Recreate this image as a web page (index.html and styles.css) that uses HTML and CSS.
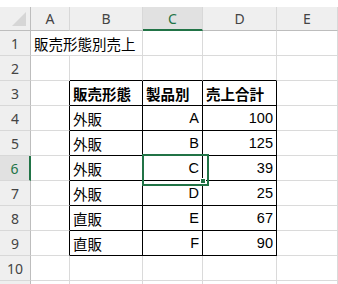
FILE: index.html
```html
<!DOCTYPE html>
<html lang="ja">
<head>
    <meta charset="UTF-8">
    <title>販売形態別売上</title>
    <link rel="stylesheet" href="styles.css">
</head>
<body>
    <div class="topbar"></div>
    <div class="sheet">
        <div class="corner">
            <svg width="16" height="16" viewBox="0 0 16 16"><polygon points="15,1 15,15 1,15" fill="#d6d6d6"/></svg>
        </div>
        <div class="colh">A</div>
        <div class="colh">B</div>
        <div class="colh sel">C</div>
        <div class="colh">D</div>
        <div class="colh">E</div>

        <div class="rowh">1</div>
        <div class="cell title">販売形態別売上</div>
        <div class="cell"></div>
        <div class="cell"></div>
        <div class="cell"></div>
        <div class="cell"></div>

        <div class="rowh">2</div>
        <div class="cell"></div>
        <div class="cell tt"></div>
        <div class="cell tt"></div>
        <div class="cell tt"></div>
        <div class="cell"></div>

        <div class="rowh">3</div>
        <div class="cell tl"></div>
        <div class="cell tb bold">販売形態</div>
        <div class="cell tb bold">製品別</div>
        <div class="cell tb bold">売上合計</div>
        <div class="cell"></div>

        <div class="rowh">4</div>
        <div class="cell tl"></div>
        <div class="cell tb">外販</div>
        <div class="cell tb num">A</div>
        <div class="cell tb num">100</div>
        <div class="cell"></div>

        <div class="rowh">5</div>
        <div class="cell tl"></div>
        <div class="cell tb">外販</div>
        <div class="cell tb num">B</div>
        <div class="cell tb num">125</div>
        <div class="cell"></div>

        <div class="rowh sel">6</div>
        <div class="cell tl"></div>
        <div class="cell tb">外販</div>
        <div class="cell tb num cursor">C<span class="handle"></span></div>
        <div class="cell tb num">39</div>
        <div class="cell"></div>

        <div class="rowh">7</div>
        <div class="cell tl"></div>
        <div class="cell tb">外販</div>
        <div class="cell tb num">D</div>
        <div class="cell tb num">25</div>
        <div class="cell"></div>

        <div class="rowh">8</div>
        <div class="cell tl"></div>
        <div class="cell tb">直販</div>
        <div class="cell tb num">E</div>
        <div class="cell tb num">67</div>
        <div class="cell"></div>

        <div class="rowh">9</div>
        <div class="cell tl"></div>
        <div class="cell tb">直販</div>
        <div class="cell tb num">F</div>
        <div class="cell tb num">90</div>
        <div class="cell"></div>

        <div class="rowh">10</div>
        <div class="cell"></div>
        <div class="cell"></div>
        <div class="cell"></div>
        <div class="cell"></div>
        <div class="cell"></div>

        <div class="rowh"></div>
        <div class="cell"></div>
        <div class="cell"></div>
        <div class="cell"></div>
        <div class="cell"></div>
        <div class="cell"></div>
    </div>
</body>
</html>
```

FILE: styles.css
```css
* {
    box-sizing: border-box;
}
body {
    margin: 0;
    background-color: white;
    font-family: "Liberation Sans", "Noto Sans CJK JP", sans-serif;
    overflow: hidden;
}
.topbar {
    height: 7px;
    background-color: white;
}
.sheet {
    display: grid;
    grid-template-columns: 31px 39px 73px 60px 74px 1fr;
    grid-template-rows: 24px;
    grid-auto-rows: 25px;
    height: 277px;
    overflow: hidden;
}
.corner {
    background-color: #efefef;
    border-right: 1px solid #bdbdbd;
    border-bottom: 1px solid #bdbdbd;
    padding: 4px 0 0 11px;
}
.corner svg {
    display: block;
}
.colh {
    background-color: #efefef;
    color: #444;
    font-family: "Noto Sans", sans-serif;
    font-size: 14px;
    display: flex;
    align-items: center;
    justify-content: center;
    border-right: 1px solid #d8d8d8;
    border-bottom: 1px solid #bdbdbd;
}
.colh.sel {
    background-color: #e1e1e1;
    color: #217346;
    border-bottom: 2px solid #217346;
}
.rowh {
    background-color: #efefef;
    color: #444;
    font-family: "Noto Sans", sans-serif;
    font-size: 14px;
    display: flex;
    align-items: center;
    justify-content: center;
    border-right: 1px solid #bdbdbd;
    border-bottom: 1px solid #d8d8d8;
}
.rowh.sel {
    background-color: #e1e1e1;
    color: #217346;
    border-right: 2px solid #217346;
}
.cell {
    border-right: 1px solid #dadada;
    border-bottom: 1px solid #dadada;
    display: flex;
    align-items: center;
    padding: 0 3px;
    font-size: 14.5px;
    color: #000;
    white-space: nowrap;
}
.title {
    overflow: visible;
    border-right: none;
}
.tt {
    border-bottom-color: #000;
}
.tl {
    border-right-color: #000;
}
.tb {
    border-right-color: #000;
    border-bottom-color: #000;
}
.bold {
    font-weight: bold;
}
.num {
    justify-content: flex-end;
}
.cursor {
    position: relative;
}
.cursor::after {
    content: "";
    position: absolute;
    left: -1px;
    top: -2px;
    width: 63px;
    height: 28px;
    border: 2px solid #217346;
}
.handle {
    position: absolute;
    right: -4px;
    bottom: -4px;
    width: 6px;
    height: 6px;
    background-color: #217346;
    border: 1px solid white;
    z-index: 1;
}
```
